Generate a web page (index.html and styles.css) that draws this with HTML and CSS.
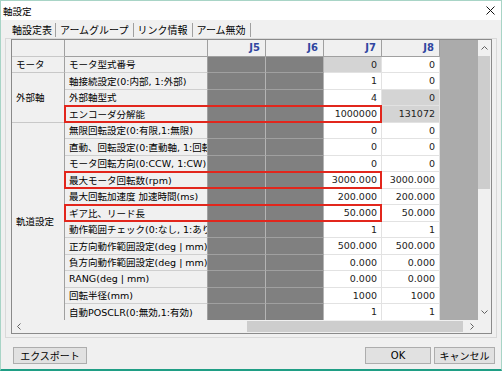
FILE: index.html
```html
<!DOCTYPE html>
<html lang="ja">
  <head>
    <meta charset="UTF-8" />
    <meta name="viewport" content="width=device-width, initial-scale=1.0" />
    <title>軸設定</title>
    <link rel="stylesheet" href="styles.css">
  </head>
  <body>
    <div class="window">
      <div class="titlebar">
        <span class="title">軸設定</span>
        <svg class="close" width="9" height="9" viewBox="0 0 9 9">
          <path d="M0.5 0.5L8.5 8.5M8.5 0.5L0.5 8.5" stroke="#111" stroke-width="1" />
        </svg>
      </div>

      <div class="body">
        <div class="tabs">
          <div class="tab active">軸設定表</div>
          <div class="tab">アームグループ</div>
          <div class="tab">リンク情報</div>
          <div class="tab">アーム無効</div>
        </div>

        <div class="panel">
          <div class="frame">
            <div class="view">
              <div class="cats">
                <div class="cat head"></div>
                <div class="cat">モータ</div>
                <div class="cat span3">外部軸</div>
                <div class="cat rest">軌道設定</div>
              </div>

              <div class="rows">
                <div class="row head">
                  <div class="c name"></div>
                  <div class="c jh">J5</div>
                  <div class="c jh">J6</div>
                  <div class="c jh">J7</div>
                  <div class="c jh">J8</div>
                  <div class="c fill"></div>
                </div>

                <div class="row">
                  <div class="c name">モータ型式番号</div>
                  <div class="c off"></div>
                  <div class="c off"></div>
                  <div class="c v ro">0</div>
                  <div class="c v">0</div>
                  <div class="c fill"></div>
                </div>
                <div class="row">
                  <div class="c name">軸接続設定(0:内部, 1:外部)</div>
                  <div class="c off"></div>
                  <div class="c off"></div>
                  <div class="c v">1</div>
                  <div class="c v">0</div>
                  <div class="c fill"></div>
                </div>
                <div class="row">
                  <div class="c name">外部軸型式</div>
                  <div class="c off"></div>
                  <div class="c off"></div>
                  <div class="c v">4</div>
                  <div class="c v ro">0</div>
                  <div class="c fill"></div>
                </div>
                <div class="row">
                  <div class="mark">
                    <div class="c name">エンコーダ分解能</div>
                    <div class="c off"></div>
                    <div class="c off"></div>
                    <div class="c v">1000000</div>
                  </div>
                  <div class="c v ro">131072</div>
                  <div class="c fill"></div>
                </div>

                <div class="row">
                  <div class="c name">無限回転設定(0:有限,1:無限)</div>
                  <div class="c off"></div>
                  <div class="c off"></div>
                  <div class="c v">0</div>
                  <div class="c v">0</div>
                  <div class="c fill"></div>
                </div>
                <div class="row">
                  <div class="c name">直動、回転設定(0:直動軸, 1:回転軸)</div>
                  <div class="c off"></div>
                  <div class="c off"></div>
                  <div class="c v">0</div>
                  <div class="c v">0</div>
                  <div class="c fill"></div>
                </div>
                <div class="row">
                  <div class="c name">モータ回転方向(0:CCW, 1:CW)</div>
                  <div class="c off"></div>
                  <div class="c off"></div>
                  <div class="c v">0</div>
                  <div class="c v">0</div>
                  <div class="c fill"></div>
                </div>
                <div class="row">
                  <div class="mark">
                    <div class="c name">最大モータ回転数(rpm)</div>
                    <div class="c off"></div>
                    <div class="c off"></div>
                    <div class="c v">3000.000</div>
                  </div>
                  <div class="c v">3000.000</div>
                  <div class="c fill"></div>
                </div>
                <div class="row">
                  <div class="c name">最大回転加速度 加速時間(ms)</div>
                  <div class="c off"></div>
                  <div class="c off"></div>
                  <div class="c v">200.000</div>
                  <div class="c v">200.000</div>
                  <div class="c fill"></div>
                </div>
                <div class="row">
                  <div class="mark">
                    <div class="c name">ギア比、リード長</div>
                    <div class="c off"></div>
                    <div class="c off"></div>
                    <div class="c v">50.000</div>
                  </div>
                  <div class="c v">50.000</div>
                  <div class="c fill"></div>
                </div>
                <div class="row">
                  <div class="c name">動作範囲チェック(0:なし, 1:あり)</div>
                  <div class="c off"></div>
                  <div class="c off"></div>
                  <div class="c v">1</div>
                  <div class="c v">1</div>
                  <div class="c fill"></div>
                </div>
                <div class="row">
                  <div class="c name">正方向動作範囲設定(deg | mm)</div>
                  <div class="c off"></div>
                  <div class="c off"></div>
                  <div class="c v">500.000</div>
                  <div class="c v">500.000</div>
                  <div class="c fill"></div>
                </div>
                <div class="row">
                  <div class="c name">負方向動作範囲設定(deg | mm)</div>
                  <div class="c off"></div>
                  <div class="c off"></div>
                  <div class="c v">0.000</div>
                  <div class="c v">0.000</div>
                  <div class="c fill"></div>
                </div>
                <div class="row">
                  <div class="c name">RANG(deg | mm)</div>
                  <div class="c off"></div>
                  <div class="c off"></div>
                  <div class="c v">0.000</div>
                  <div class="c v">0.000</div>
                  <div class="c fill"></div>
                </div>
                <div class="row">
                  <div class="c name">回転半径(mm)</div>
                  <div class="c off"></div>
                  <div class="c off"></div>
                  <div class="c v">1000</div>
                  <div class="c v">1000</div>
                  <div class="c fill"></div>
                </div>
                <div class="row">
                  <div class="c name">自動POSCLR(0:無効,1:有効)</div>
                  <div class="c off"></div>
                  <div class="c off"></div>
                  <div class="c v">1</div>
                  <div class="c v">1</div>
                  <div class="c fill"></div>
                </div>
              </div>
            </div>

            <div class="vscroll">
              <div class="arrow">
                <svg width="7" height="4" viewBox="0 0 7 4"><path d="M0.5 3.5L3.5 0.5L6.5 3.5" fill="none" stroke="#606060" /></svg>
              </div>
              <div class="vthumb"></div>
              <div class="track"></div>
              <div class="arrow">
                <svg width="7" height="4" viewBox="0 0 7 4"><path d="M0.5 0.5L3.5 3.5L6.5 0.5" fill="none" stroke="#606060" /></svg>
              </div>
            </div>

            <div class="hscroll">
              <div class="arrow">
                <svg width="4" height="7" viewBox="0 0 4 7"><path d="M3.5 0.5L0.5 3.5L3.5 6.5" fill="none" stroke="#606060" /></svg>
              </div>
              <div class="hgap"></div>
              <div class="hthumb"></div>
              <div class="track"></div>
              <div class="arrow">
                <svg width="4" height="7" viewBox="0 0 4 7"><path d="M0.5 0.5L3.5 3.5L0.5 6.5" fill="none" stroke="#606060" /></svg>
              </div>
            </div>

            <div class="corner"></div>
          </div>
        </div>

        <div class="footer">
          <button type="button" class="btn export">エクスポート</button>
          <button type="button" class="btn ok">OK</button>
          <button type="button" class="btn cancel">キャンセル</button>
        </div>
      </div>
    </div>
  </body>
</html>
```

FILE: styles.css
```css
* {
  box-sizing: border-box;
}

body {
  margin: 0;
  font-family: "DejaVu Sans", "Noto Sans CJK JP", sans-serif;
  font-size: 10px;
  color: #000;
}

.window {
  width: 502px;
  height: 371px;
  display: flex;
  flex-direction: column;
  background-color: #f0f0f0;
  border: 1px solid #a8d4c6;
  border-bottom: 2px solid #1f9e85;
}

.titlebar {
  height: 19px;
  flex: none;
  display: flex;
  align-items: center;
  justify-content: space-between;
  padding: 0 6px 0 2px;
  background-color: #fff;
}

.title {
  font-size: 9.5px;
}

.body {
  flex: 1;
  display: flex;
  flex-direction: column;
  padding: 1px 4px 0;
}

/* tabs */

.tabs {
  display: flex;
  height: 17px;
  margin-left: 2px;
}

.tab {
  padding: 0 4px;
  line-height: 17px;
  border-right: 1px solid #a0a0a0;
  margin: 2px 0 1px;
  display: flex;
  align-items: center;
}

.tab.active {
  padding-left: 5px;
  padding-right: 3px;
}

.panel {
  border: 1px solid #d9d9d9;
  padding: 0 3px 3px 5px;
}

/* grid frame */

.frame {
  width: 481px;
  height: 295px;
  display: grid;
  grid-template-columns: 466px 13px;
  grid-template-rows: 280px 13px;
  border: 1px solid #8a8a8a;
}

.view {
  display: flex;
  overflow: hidden;
}

.cats {
  width: 53px;
  flex: none;
  display: flex;
  flex-direction: column;
}

.cat {
  flex: none;
  height: 16.5px;
  display: flex;
  align-items: center;
  padding-left: 4px;
  font-size: 9.5px;
  background-color: #f0f0f0;
  border-right: 1px solid #a0a0a0;
  border-bottom: 1px solid #c8c8c8;
}

.cat.span3 {
  height: 49.5px;
}

.cat.rest {
  flex: 1;
  border-bottom: none;
}

.rows {
  display: flex;
  flex-direction: column;
}

.row {
  flex: none;
  display: flex;
  height: 16.5px;
}

.mark {
  position: relative;
  display: flex;
}

.mark::after {
  content: "";
  position: absolute;
  inset: -1px 0 0 -1px;
  border: 2px solid #e2261c;
}

.c {
  flex: none;
  width: 58px;
  height: 100%;
  display: flex;
  align-items: center;
  white-space: nowrap;
  overflow: hidden;
  border-right: 1px solid #e2e2e2;
  border-bottom: 1px solid #e2e2e2;
}

.name {
  width: 143px;
  padding-left: 4px;
  font-size: 9.5px;
  background-color: #f0f0f0;
  border-right-color: #a0a0a0;
  border-bottom-color: #cfcfcf;
}

.off {
  background-color: #808080;
  border-right-color: #b4b4b4;
  border-bottom-color: #a0a0a0;
}

.v {
  justify-content: flex-end;
  padding-right: 4px;
  font-size: 9.5px;
  color: #222;
  background-color: #fff;
}

.v.ro {
  background-color: #d4d4d4;
}

.fill {
  width: 38px;
  background-color: #ababab;
  border: none;
}

.row.head .c {
  background-color: #f0f0f0;
  border-right-color: #a0a0a0;
  border-bottom-color: #a0a0a0;
}

.row.head .fill {
  background-color: #ababab;
}

.jh {
  justify-content: flex-end;
  padding-right: 5px;
  font-weight: bold;
  color: #2f45a0;
}

/* scrollbars */

.vscroll {
  display: flex;
  flex-direction: column;
  background-color: #f0f0f0;
}

.hscroll {
  display: flex;
  background-color: #f0f0f0;
}

.arrow {
  flex: none;
  width: 13px;
  height: 16px;
  display: flex;
  align-items: center;
  justify-content: center;
}

.hscroll .arrow {
  height: 100%;
}

.vthumb {
  height: 133px;
  margin-right: 1px;
  background-color: #cdcdcd;
}

.hgap {
  width: 222px;
}

.hthumb {
  width: 216px;
  margin: 1px 0;
  background-color: #cdcdcd;
}

.track {
  flex: 1;
}

.corner {
  background-color: #f0f0f0;
}

/* buttons */

.footer {
  display: flex;
  margin-top: 9px;
  padding: 0 2px 0 8px;
}

.btn {
  height: 17px;
  padding: 0;
  font-family: inherit;
  font-size: 10px;
  color: #000;
  background-color: #e1e1e1;
  border: 1px solid #adadad;
}

.export {
  width: 74px;
}

.ok {
  width: 66px;
  margin-left: auto;
}

.cancel {
  width: 61px;
  margin-left: 3px;
}
```
